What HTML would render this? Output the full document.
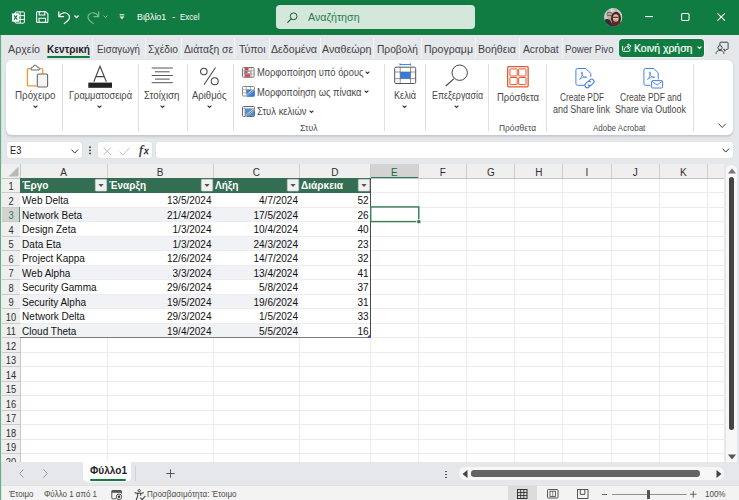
<!DOCTYPE html>
<html lang="el"><head><meta charset="utf-8"><title>Βιβλίο1 - Excel</title>
<style>
html,body{margin:0;padding:0;}
body{width:739px;height:500px;position:relative;overflow:hidden;background:#e5e8eb;font-family:'Liberation Sans',sans-serif;}
#app{position:absolute;left:0;top:0;width:739px;height:500px;overflow:hidden;}
#app div,#app svg,#app span{position:absolute;}
#app svg{overflow:visible;}
.t{white-space:pre;transform-origin:0 50%;}
.c{white-space:pre;font-size:10px;line-height:14px;color:#111;}
.r{text-align:right;}
</style></head><body><div id="app">
<div style="left:0px;top:0px;width:739px;height:34.5px;background:#107c41;"></div>
<div style="left:276.4px;top:5px;width:198.6px;height:24px;background:#d3e7db;border-radius:4px;"></div>
<span class="t" style="left:136.50px;top:11.85px;font-size:9px;line-height:11.7px;color:#fff;transform:scaleX(0.9831);">Βιβλίο1</span>
<span class="t" style="left:171.70px;top:11.85px;font-size:9px;line-height:11.7px;color:#fff;transform:scaleX(1.1333);">-</span>
<span class="t" style="left:179.80px;top:11.85px;font-size:9px;line-height:11.7px;color:#fff;transform:scaleX(0.8812);">Excel</span>
<span class="t" style="left:307.50px;top:11.07px;font-size:10.5px;line-height:13.65px;color:#2b7a51;transform:scaleX(1.0171);">Αναζήτηση</span>
<div style="left:0px;top:34.5px;width:739px;height:129px;background:#e5e8eb;"></div>
<span class="t" style="left:7.50px;top:42.50px;font-size:10px;line-height:13.0px;color:#424242;transform:scaleX(1.0717);">Αρχείο</span>
<span class="t" style="left:46.50px;top:42.50px;font-size:10px;line-height:13.0px;color:#1f1f1f;font-weight:700;transform:scaleX(1.0081);">Κεντρική</span>
<span class="t" style="left:96.50px;top:42.50px;font-size:10px;line-height:13.0px;color:#424242;transform:scaleX(0.9724);">Εισαγωγή</span>
<span class="t" style="left:147.50px;top:42.50px;font-size:10px;line-height:13.0px;color:#424242;transform:scaleX(1.0256);">Σχέδιο</span>
<span class="t" style="left:184.00px;top:42.50px;font-size:10px;line-height:13.0px;color:#424242;transform:scaleX(1.0265);">Διάταξη σε</span>
<span class="t" style="left:238.50px;top:42.50px;font-size:10px;line-height:13.0px;color:#424242;transform:scaleX(1.0495);">Τύποι</span>
<span class="t" style="left:270.50px;top:42.50px;font-size:10px;line-height:13.0px;color:#424242;transform:scaleX(1.0628);">Δεδομένα</span>
<span class="t" style="left:322.00px;top:42.50px;font-size:10px;line-height:13.0px;color:#424242;transform:scaleX(1.0677);">Αναθεώρη</span>
<span class="t" style="left:376.50px;top:42.50px;font-size:10px;line-height:13.0px;color:#424242;transform:scaleX(1.0210);">Προβολή</span>
<span class="t" style="left:423.50px;top:42.50px;font-size:10px;line-height:13.0px;color:#424242;transform:scaleX(1.0545);">Προγραμμ</span>
<span class="t" style="left:477.50px;top:42.50px;font-size:10px;line-height:13.0px;color:#424242;transform:scaleX(1.0606);">Βοήθεια</span>
<span class="t" style="left:522.50px;top:42.50px;font-size:10px;line-height:13.0px;color:#424242;transform:scaleX(1.0299);">Acrobat</span>
<span class="t" style="left:564.50px;top:42.50px;font-size:10px;line-height:13.0px;color:#424242;transform:scaleX(0.9589);">Power Pivo</span>
<div style="left:92.0px;top:38px;width:1px;height:20px;background:#f2f4f6;"></div>
<div style="left:144.5px;top:38px;width:1px;height:20px;background:#f2f4f6;"></div>
<div style="left:180.5px;top:38px;width:1px;height:20px;background:#f2f4f6;"></div>
<div style="left:234.0px;top:38px;width:1px;height:20px;background:#f2f4f6;"></div>
<div style="left:268.5px;top:38px;width:1px;height:20px;background:#f2f4f6;"></div>
<div style="left:319.5px;top:38px;width:1px;height:20px;background:#f2f4f6;"></div>
<div style="left:372.5px;top:38px;width:1px;height:20px;background:#f2f4f6;"></div>
<div style="left:420.5px;top:38px;width:1px;height:20px;background:#f2f4f6;"></div>
<div style="left:474.5px;top:38px;width:1px;height:20px;background:#f2f4f6;"></div>
<div style="left:518.5px;top:38px;width:1px;height:20px;background:#f2f4f6;"></div>
<div style="left:562.0px;top:38px;width:1px;height:20px;background:#f2f4f6;"></div>
<div style="left:46.5px;top:55.9px;width:43px;height:1.9px;background:#107c41;border-radius:1px;"></div>
<div style="left:618.8px;top:38.6px;width:85.3px;height:18.1px;background:#107c41;border-radius:3.5px;box-shadow:0 0 0 0.8px #f3f5f7;"></div>
<span class="t" style="left:634.30px;top:41.80px;font-size:10px;line-height:13.0px;color:#fff;transform:scaleX(1.0446);-webkit-text-stroke:0.2px #fff;">Κοινή χρήση</span>
<div style="left:6px;top:60px;width:727px;height:75px;background:#fff;border-radius:6px;box-shadow:0 1.2px 2.4px rgba(40,55,70,.17);"></div>
<div style="left:62.0px;top:64px;width:1px;height:67px;background:#e0e0e0;"></div>
<div style="left:137.5px;top:64px;width:1px;height:67px;background:#e0e0e0;"></div>
<div style="left:186.5px;top:64px;width:1px;height:67px;background:#e0e0e0;"></div>
<div style="left:232.5px;top:64px;width:1px;height:67px;background:#e0e0e0;"></div>
<div style="left:384.0px;top:64px;width:1px;height:67px;background:#e0e0e0;"></div>
<div style="left:424.5px;top:64px;width:1px;height:67px;background:#e0e0e0;"></div>
<div style="left:487.5px;top:64px;width:1px;height:67px;background:#e0e0e0;"></div>
<div style="left:545.5px;top:64px;width:1px;height:67px;background:#e0e0e0;"></div>
<div style="left:693.2px;top:64px;width:1px;height:67px;background:#e0e0e0;"></div>
<span class="t" style="left:15.00px;top:88.50px;font-size:10px;line-height:13.0px;color:#484848;transform:scaleX(0.9785);">Πρόχειρο</span>
<span class="t" style="left:68.50px;top:88.50px;font-size:10px;line-height:13.0px;color:#484848;transform:scaleX(0.9267);">Γραμματοσειρά</span>
<span class="t" style="left:144.00px;top:88.50px;font-size:10px;line-height:13.0px;color:#484848;transform:scaleX(0.9726);">Στοίχιση</span>
<span class="t" style="left:192.00px;top:88.50px;font-size:10px;line-height:13.0px;color:#484848;transform:scaleX(0.9505);">Αριθμός</span>
<span class="t" style="left:257.00px;top:66.00px;font-size:10px;line-height:13.0px;color:#484848;transform:scaleX(0.9350);">Μορφοποίηση υπό όρους</span>
<span class="t" style="left:257.00px;top:85.50px;font-size:10px;line-height:13.0px;color:#484848;transform:scaleX(0.9324);">Μορφοποίηση ως πίνακα</span>
<span class="t" style="left:257.00px;top:104.50px;font-size:10px;line-height:13.0px;color:#484848;transform:scaleX(0.9448);">Στυλ κελιών</span>
<span class="t" style="left:300.00px;top:122.97px;font-size:8.5px;line-height:11.05px;color:#4a4a4a;transform:scaleX(1.0228);">Στυλ</span>
<span class="t" style="left:393.50px;top:88.50px;font-size:10px;line-height:13.0px;color:#484848;transform:scaleX(0.9113);">Κελιά</span>
<span class="t" style="left:431.50px;top:88.50px;font-size:10px;line-height:13.0px;color:#484848;transform:scaleX(0.8853);">Επεξεργασία</span>
<span class="t" style="left:496.50px;top:90.50px;font-size:10px;line-height:13.0px;color:#484848;transform:scaleX(0.9488);">Πρόσθετα</span>
<span class="t" style="left:498.50px;top:122.97px;font-size:8.5px;line-height:11.05px;color:#4a4a4a;transform:scaleX(0.9834);">Πρόσθετα</span>
<span class="t" style="left:560.00px;top:91.00px;font-size:10px;line-height:13.0px;color:#484848;transform:scaleX(0.8334);">Create PDF</span>
<span class="t" style="left:553.00px;top:102.50px;font-size:10px;line-height:13.0px;color:#484848;transform:scaleX(0.8915);">and Share link</span>
<span class="t" style="left:619.50px;top:91.00px;font-size:10px;line-height:13.0px;color:#484848;transform:scaleX(0.8510);">Create PDF and</span>
<span class="t" style="left:614.50px;top:102.50px;font-size:10px;line-height:13.0px;color:#484848;transform:scaleX(0.8931);">Share via Outlook</span>
<span class="t" style="left:593.20px;top:122.97px;font-size:8.5px;line-height:11.05px;color:#4a4a4a;transform:scaleX(0.9379);">Adobe Acrobat</span>
<div style="left:7px;top:142.4px;width:75px;height:15.6px;background:#fff;border-radius:3px;box-shadow:0 0 0 0.6px #dcdfe3;"></div>
<div style="left:98px;top:142.4px;width:54px;height:15.6px;background:#fff;border-radius:3px;box-shadow:0 0 0 0.6px #dcdfe3;"></div>
<div style="left:156px;top:142.4px;width:576.5px;height:15.6px;background:#fff;border-radius:3px;box-shadow:0 0 0 0.6px #dcdfe3;"></div>
<span class="t" style="left:10.20px;top:143.35px;font-size:11px;line-height:14.3px;color:#222;transform:scaleX(0.8390);">E3</span>
<span class="t" style="left:139px;top:141.6px;font-family:'Liberation Serif',serif;font-style:italic;font-size:13.5px;line-height:16px;color:#222;-webkit-text-stroke:0.25px #222">f</span><span class="t" style="left:144px;top:144.3px;font-family:'Liberation Serif',serif;font-style:italic;font-size:10.5px;line-height:13px;color:#222;-webkit-text-stroke:0.3px #222">x</span>
<div style="left:0px;top:163.5px;width:739px;height:298.5px;background:#fff;"></div>
<div style="left:1.8px;top:163.5px;width:722.2px;height:14.5px;background:#efefef;"></div>
<div style="left:370px;top:163.5px;width:48.7px;height:14.5px;background:#d3d3d3;"></div>
<div style="left:370px;top:177px;width:48.7px;height:1.4px;background:#2f7a53;"></div>
<div style="left:1.5px;top:178px;width:18.5px;height:284px;background:#efefef;"></div>
<div style="left:1.5px;top:207px;width:18.5px;height:14.5px;background:#d3d3d3;"></div>
<div style="left:20px;top:177.5px;width:704px;height:1px;background:#ececec;"></div>
<div style="left:20px;top:192.0px;width:704px;height:1px;background:#ececec;"></div>
<div style="left:20px;top:206.5px;width:704px;height:1px;background:#ececec;"></div>
<div style="left:20px;top:221.0px;width:704px;height:1px;background:#ececec;"></div>
<div style="left:20px;top:235.5px;width:704px;height:1px;background:#ececec;"></div>
<div style="left:20px;top:250.0px;width:704px;height:1px;background:#ececec;"></div>
<div style="left:20px;top:264.5px;width:704px;height:1px;background:#ececec;"></div>
<div style="left:20px;top:279.0px;width:704px;height:1px;background:#ececec;"></div>
<div style="left:20px;top:293.5px;width:704px;height:1px;background:#ececec;"></div>
<div style="left:20px;top:308.0px;width:704px;height:1px;background:#ececec;"></div>
<div style="left:20px;top:322.5px;width:704px;height:1px;background:#ececec;"></div>
<div style="left:20px;top:337.0px;width:704px;height:1px;background:#ececec;"></div>
<div style="left:20px;top:351.5px;width:704px;height:1px;background:#ececec;"></div>
<div style="left:20px;top:366.0px;width:704px;height:1px;background:#ececec;"></div>
<div style="left:20px;top:380.5px;width:704px;height:1px;background:#ececec;"></div>
<div style="left:20px;top:395.0px;width:704px;height:1px;background:#ececec;"></div>
<div style="left:20px;top:409.5px;width:704px;height:1px;background:#ececec;"></div>
<div style="left:20px;top:424.0px;width:704px;height:1px;background:#ececec;"></div>
<div style="left:20px;top:438.5px;width:704px;height:1px;background:#ececec;"></div>
<div style="left:20px;top:453.0px;width:704px;height:1px;background:#ececec;"></div>
<div style="left:106.5px;top:178px;width:1px;height:284px;background:#ececec;"></div>
<div style="left:106.5px;top:164px;width:1px;height:14px;background:#cdcdcd;"></div>
<div style="left:212.5px;top:178px;width:1px;height:284px;background:#ececec;"></div>
<div style="left:212.5px;top:164px;width:1px;height:14px;background:#cdcdcd;"></div>
<div style="left:299.0px;top:178px;width:1px;height:284px;background:#ececec;"></div>
<div style="left:299.0px;top:164px;width:1px;height:14px;background:#cdcdcd;"></div>
<div style="left:369.5px;top:178px;width:1px;height:284px;background:#ececec;"></div>
<div style="left:369.5px;top:164px;width:1px;height:14px;background:#cdcdcd;"></div>
<div style="left:418.2px;top:178px;width:1px;height:284px;background:#ececec;"></div>
<div style="left:418.2px;top:164px;width:1px;height:14px;background:#cdcdcd;"></div>
<div style="left:466.3px;top:178px;width:1px;height:284px;background:#ececec;"></div>
<div style="left:466.3px;top:164px;width:1px;height:14px;background:#cdcdcd;"></div>
<div style="left:514.3px;top:178px;width:1px;height:284px;background:#ececec;"></div>
<div style="left:514.3px;top:164px;width:1px;height:14px;background:#cdcdcd;"></div>
<div style="left:562.3px;top:178px;width:1px;height:284px;background:#ececec;"></div>
<div style="left:562.3px;top:164px;width:1px;height:14px;background:#cdcdcd;"></div>
<div style="left:610.5px;top:178px;width:1px;height:284px;background:#ececec;"></div>
<div style="left:610.5px;top:164px;width:1px;height:14px;background:#cdcdcd;"></div>
<div style="left:658.8px;top:178px;width:1px;height:284px;background:#ececec;"></div>
<div style="left:658.8px;top:164px;width:1px;height:14px;background:#cdcdcd;"></div>
<div style="left:707.1px;top:178px;width:1px;height:284px;background:#ececec;"></div>
<div style="left:707.1px;top:164px;width:1px;height:14px;background:#cdcdcd;"></div>
<div style="left:723.5px;top:178px;width:1px;height:284px;background:#ececec;"></div>
<div style="left:723.5px;top:164px;width:1px;height:14px;background:#cdcdcd;"></div>
<div style="left:1.5px;top:177.5px;width:18.5px;height:1px;background:#cbcbcb;"></div>
<div style="left:1.5px;top:192.0px;width:18.5px;height:1px;background:#cbcbcb;"></div>
<div style="left:1.5px;top:206.5px;width:18.5px;height:1px;background:#cbcbcb;"></div>
<div style="left:1.5px;top:221.0px;width:18.5px;height:1px;background:#cbcbcb;"></div>
<div style="left:1.5px;top:235.5px;width:18.5px;height:1px;background:#cbcbcb;"></div>
<div style="left:1.5px;top:250.0px;width:18.5px;height:1px;background:#cbcbcb;"></div>
<div style="left:1.5px;top:264.5px;width:18.5px;height:1px;background:#cbcbcb;"></div>
<div style="left:1.5px;top:279.0px;width:18.5px;height:1px;background:#cbcbcb;"></div>
<div style="left:1.5px;top:293.5px;width:18.5px;height:1px;background:#cbcbcb;"></div>
<div style="left:1.5px;top:308.0px;width:18.5px;height:1px;background:#cbcbcb;"></div>
<div style="left:1.5px;top:322.5px;width:18.5px;height:1px;background:#cbcbcb;"></div>
<div style="left:1.5px;top:337.0px;width:18.5px;height:1px;background:#cbcbcb;"></div>
<div style="left:1.5px;top:351.5px;width:18.5px;height:1px;background:#cbcbcb;"></div>
<div style="left:1.5px;top:366.0px;width:18.5px;height:1px;background:#cbcbcb;"></div>
<div style="left:1.5px;top:380.5px;width:18.5px;height:1px;background:#cbcbcb;"></div>
<div style="left:1.5px;top:395.0px;width:18.5px;height:1px;background:#cbcbcb;"></div>
<div style="left:1.5px;top:409.5px;width:18.5px;height:1px;background:#cbcbcb;"></div>
<div style="left:1.5px;top:424.0px;width:18.5px;height:1px;background:#cbcbcb;"></div>
<div style="left:1.5px;top:438.5px;width:18.5px;height:1px;background:#cbcbcb;"></div>
<div style="left:1.5px;top:453.0px;width:18.5px;height:1px;background:#cbcbcb;"></div>
<div style="left:19.7px;top:163.5px;width:1px;height:298.5px;background:#c8c8c8;"></div>
<div style="left:1.5px;top:177.5px;width:722.5px;height:1px;background:#c4c4c4;"></div>
<div style="left:19px;top:207px;width:2px;height:14.5px;background:#4f936e;"></div>
<span class="t" style="left:48.50px;width:30px;text-align:center;top:165.60px;font-size:10px;line-height:13.0px;color:#303030;">A</span>
<span class="t" style="left:145.00px;width:30px;text-align:center;top:165.60px;font-size:10px;line-height:13.0px;color:#303030;">B</span>
<span class="t" style="left:241.25px;width:30px;text-align:center;top:165.60px;font-size:10px;line-height:13.0px;color:#303030;">C</span>
<span class="t" style="left:319.75px;width:30px;text-align:center;top:165.60px;font-size:10px;line-height:13.0px;color:#303030;">D</span>
<span class="t" style="left:379.35px;width:30px;text-align:center;top:165.60px;font-size:10px;line-height:13.0px;color:#1e6a42;">E</span>
<span class="t" style="left:427.75px;width:30px;text-align:center;top:165.60px;font-size:10px;line-height:13.0px;color:#303030;">F</span>
<span class="t" style="left:475.80px;width:30px;text-align:center;top:165.60px;font-size:10px;line-height:13.0px;color:#303030;">G</span>
<span class="t" style="left:523.80px;width:30px;text-align:center;top:165.60px;font-size:10px;line-height:13.0px;color:#303030;">H</span>
<span class="t" style="left:571.90px;width:30px;text-align:center;top:165.60px;font-size:10px;line-height:13.0px;color:#303030;">I</span>
<span class="t" style="left:620.15px;width:30px;text-align:center;top:165.60px;font-size:10px;line-height:13.0px;color:#303030;">J</span>
<span class="t" style="left:668.45px;width:30px;text-align:center;top:165.60px;font-size:10px;line-height:13.0px;color:#303030;">K</span>
<svg style="left:8px;top:166px" width="11" height="11" viewBox="0 0 11 11"><path d="M10.5 0.5V10.5H0.5Z" fill="#b9b9b9"/></svg>
<span class="t" style="left:-4.30px;width:30px;text-align:center;top:180.15px;font-size:10px;line-height:13.0px;color:#2e2e2e;transform-origin:center;transform:scaleX(0.93);">1</span>
<span class="t" style="left:-4.30px;width:30px;text-align:center;top:194.65px;font-size:10px;line-height:13.0px;color:#2e2e2e;transform-origin:center;transform:scaleX(0.93);">2</span>
<span class="t" style="left:-4.30px;width:30px;text-align:center;top:209.15px;font-size:10px;line-height:13.0px;color:#2a7a52;transform-origin:center;transform:scaleX(0.93);">3</span>
<span class="t" style="left:-4.30px;width:30px;text-align:center;top:223.65px;font-size:10px;line-height:13.0px;color:#2e2e2e;transform-origin:center;transform:scaleX(0.93);">4</span>
<span class="t" style="left:-4.30px;width:30px;text-align:center;top:238.15px;font-size:10px;line-height:13.0px;color:#2e2e2e;transform-origin:center;transform:scaleX(0.93);">5</span>
<span class="t" style="left:-4.30px;width:30px;text-align:center;top:252.65px;font-size:10px;line-height:13.0px;color:#2e2e2e;transform-origin:center;transform:scaleX(0.93);">6</span>
<span class="t" style="left:-4.30px;width:30px;text-align:center;top:267.15px;font-size:10px;line-height:13.0px;color:#2e2e2e;transform-origin:center;transform:scaleX(0.93);">7</span>
<span class="t" style="left:-4.30px;width:30px;text-align:center;top:281.65px;font-size:10px;line-height:13.0px;color:#2e2e2e;transform-origin:center;transform:scaleX(0.93);">8</span>
<span class="t" style="left:-4.30px;width:30px;text-align:center;top:296.15px;font-size:10px;line-height:13.0px;color:#2e2e2e;transform-origin:center;transform:scaleX(0.93);">9</span>
<span class="t" style="left:-4.30px;width:30px;text-align:center;top:310.65px;font-size:10px;line-height:13.0px;color:#2e2e2e;transform-origin:center;transform:scaleX(0.93);">10</span>
<span class="t" style="left:-4.30px;width:30px;text-align:center;top:325.15px;font-size:10px;line-height:13.0px;color:#2e2e2e;transform-origin:center;transform:scaleX(0.93);">11</span>
<span class="t" style="left:-4.30px;width:30px;text-align:center;top:339.65px;font-size:10px;line-height:13.0px;color:#2e2e2e;transform-origin:center;transform:scaleX(0.93);">12</span>
<span class="t" style="left:-4.30px;width:30px;text-align:center;top:354.15px;font-size:10px;line-height:13.0px;color:#2e2e2e;transform-origin:center;transform:scaleX(0.93);">13</span>
<span class="t" style="left:-4.30px;width:30px;text-align:center;top:368.65px;font-size:10px;line-height:13.0px;color:#2e2e2e;transform-origin:center;transform:scaleX(0.93);">14</span>
<span class="t" style="left:-4.30px;width:30px;text-align:center;top:383.15px;font-size:10px;line-height:13.0px;color:#2e2e2e;transform-origin:center;transform:scaleX(0.93);">15</span>
<span class="t" style="left:-4.30px;width:30px;text-align:center;top:397.65px;font-size:10px;line-height:13.0px;color:#2e2e2e;transform-origin:center;transform:scaleX(0.93);">16</span>
<span class="t" style="left:-4.30px;width:30px;text-align:center;top:412.15px;font-size:10px;line-height:13.0px;color:#2e2e2e;transform-origin:center;transform:scaleX(0.93);">17</span>
<span class="t" style="left:-4.30px;width:30px;text-align:center;top:426.65px;font-size:10px;line-height:13.0px;color:#2e2e2e;transform-origin:center;transform:scaleX(0.93);">18</span>
<span class="t" style="left:-4.30px;width:30px;text-align:center;top:441.15px;font-size:10px;line-height:13.0px;color:#2e2e2e;transform-origin:center;transform:scaleX(0.93);">19</span>
<span class="t" style="left:-4.30px;width:30px;text-align:center;top:455.65px;font-size:10px;line-height:13.0px;color:#2e2e2e;transform-origin:center;transform:scaleX(0.93);">20</span>
<div style="left:20px;top:178px;width:350px;height:14.5px;background:#336d52;"></div>
<div style="left:20.2px;top:192.5px;width:349.8px;height:145.0px;background:#fff;"></div>
<div style="left:20.2px;top:207.0px;width:279.3px;height:14.5px;background:#f0f2f5;"></div>
<div style="left:20.2px;top:236.0px;width:279.3px;height:14.5px;background:#f0f2f5;"></div>
<div style="left:20.2px;top:265.0px;width:279.3px;height:14.5px;background:#f0f2f5;"></div>
<div style="left:20.2px;top:294.0px;width:279.3px;height:14.5px;background:#f0f2f5;"></div>
<div style="left:20.2px;top:323.0px;width:279.3px;height:14.5px;background:#f0f2f5;"></div>
<div style="left:20.2px;top:206.5px;width:349.8px;height:1px;background:#eaecef;"></div>
<div style="left:20.2px;top:221.0px;width:349.8px;height:1px;background:#eaecef;"></div>
<div style="left:20.2px;top:235.5px;width:349.8px;height:1px;background:#eaecef;"></div>
<div style="left:20.2px;top:250.0px;width:349.8px;height:1px;background:#eaecef;"></div>
<div style="left:20.2px;top:264.5px;width:349.8px;height:1px;background:#eaecef;"></div>
<div style="left:20.2px;top:279.0px;width:349.8px;height:1px;background:#eaecef;"></div>
<div style="left:20.2px;top:293.5px;width:349.8px;height:1px;background:#eaecef;"></div>
<div style="left:20.2px;top:308.0px;width:349.8px;height:1px;background:#eaecef;"></div>
<div style="left:20.2px;top:322.5px;width:349.8px;height:1px;background:#eaecef;"></div>
<div style="left:20.2px;top:337.0px;width:349.8px;height:1px;background:#eaecef;"></div>
<div style="left:369.6px;top:178px;width:1px;height:159.4px;background:#4a4a4a;"></div>
<div style="left:20px;top:337px;width:350.5px;height:1px;background:#7a7a7a;"></div>
<span class="t" style="left:21.50px;top:179.38px;font-size:10.5px;line-height:13.65px;color:#fff;font-weight:700;transform:scaleX(0.9560);">Έργο</span>
<span class="t" style="left:108.50px;top:179.38px;font-size:10.5px;line-height:13.65px;color:#fff;font-weight:700;transform:scaleX(0.9525);">Έναρξη</span>
<span class="t" style="left:214.50px;top:179.38px;font-size:10.5px;line-height:13.65px;color:#fff;font-weight:700;transform:scaleX(0.9586);">Λήξη</span>
<span class="t" style="left:300.50px;top:179.38px;font-size:10.5px;line-height:13.65px;color:#fff;font-weight:700;transform:scaleX(0.9624);">Διάρκεια</span>
<svg style="left:94.7px;top:179.4px" width="12" height="12.4" viewBox="0 0 12 12.4"><rect x="0.3" y="0.3" width="11.4" height="11.8" rx="0.8" fill="#f1f1f1" stroke="#c4c4c4" stroke-width="0.6"/><path d="M3.4 4.9H8.6L6 8Z" fill="#555"/></svg>
<svg style="left:200.7px;top:179.4px" width="12" height="12.4" viewBox="0 0 12 12.4"><rect x="0.3" y="0.3" width="11.4" height="11.8" rx="0.8" fill="#f1f1f1" stroke="#c4c4c4" stroke-width="0.6"/><path d="M3.4 4.9H8.6L6 8Z" fill="#555"/></svg>
<svg style="left:287.2px;top:179.4px" width="12" height="12.4" viewBox="0 0 12 12.4"><rect x="0.3" y="0.3" width="11.4" height="11.8" rx="0.8" fill="#f1f1f1" stroke="#c4c4c4" stroke-width="0.6"/><path d="M3.4 4.9H8.6L6 8Z" fill="#555"/></svg>
<svg style="left:357.7px;top:179.4px" width="12" height="12.4" viewBox="0 0 12 12.4"><rect x="0.3" y="0.3" width="11.4" height="11.8" rx="0.8" fill="#f1f1f1" stroke="#c4c4c4" stroke-width="0.6"/><path d="M3.4 4.9H8.6L6 8Z" fill="#555"/></svg>
<span class="c" style="left:22.1px;top:194.05px">Web Delta</span><span class="c r" style="left:107px;width:104.5px;top:194.05px">13/5/2024</span><span class="c r" style="left:213px;width:85px;top:194.05px">4/7/2024</span><span class="c r" style="left:299.5px;width:69px;top:194.05px">52</span><span class="c" style="left:22.1px;top:208.55px">Network Beta</span><span class="c r" style="left:107px;width:104.5px;top:208.55px">21/4/2024</span><span class="c r" style="left:213px;width:85px;top:208.55px">17/5/2024</span><span class="c r" style="left:299.5px;width:69px;top:208.55px">26</span><span class="c" style="left:22.1px;top:223.05px">Design Zeta</span><span class="c r" style="left:107px;width:104.5px;top:223.05px">1/3/2024</span><span class="c r" style="left:213px;width:85px;top:223.05px">10/4/2024</span><span class="c r" style="left:299.5px;width:69px;top:223.05px">40</span><span class="c" style="left:22.1px;top:237.55px">Data Eta</span><span class="c r" style="left:107px;width:104.5px;top:237.55px">1/3/2024</span><span class="c r" style="left:213px;width:85px;top:237.55px">24/3/2024</span><span class="c r" style="left:299.5px;width:69px;top:237.55px">23</span><span class="c" style="left:22.1px;top:252.05px">Project Kappa</span><span class="c r" style="left:107px;width:104.5px;top:252.05px">12/6/2024</span><span class="c r" style="left:213px;width:85px;top:252.05px">14/7/2024</span><span class="c r" style="left:299.5px;width:69px;top:252.05px">32</span><span class="c" style="left:22.1px;top:266.55px">Web Alpha</span><span class="c r" style="left:107px;width:104.5px;top:266.55px">3/3/2024</span><span class="c r" style="left:213px;width:85px;top:266.55px">13/4/2024</span><span class="c r" style="left:299.5px;width:69px;top:266.55px">41</span><span class="c" style="left:22.1px;top:281.05px">Security Gamma</span><span class="c r" style="left:107px;width:104.5px;top:281.05px">29/6/2024</span><span class="c r" style="left:213px;width:85px;top:281.05px">5/8/2024</span><span class="c r" style="left:299.5px;width:69px;top:281.05px">37</span><span class="c" style="left:22.1px;top:295.55px">Security Alpha</span><span class="c r" style="left:107px;width:104.5px;top:295.55px">19/5/2024</span><span class="c r" style="left:213px;width:85px;top:295.55px">19/6/2024</span><span class="c r" style="left:299.5px;width:69px;top:295.55px">31</span><span class="c" style="left:22.1px;top:310.05px">Network Delta</span><span class="c r" style="left:107px;width:104.5px;top:310.05px">29/3/2024</span><span class="c r" style="left:213px;width:85px;top:310.05px">1/5/2024</span><span class="c r" style="left:299.5px;width:69px;top:310.05px">33</span><span class="c" style="left:22.1px;top:324.55px">Cloud Theta</span><span class="c r" style="left:107px;width:104.5px;top:324.55px">19/4/2024</span><span class="c r" style="left:213px;width:85px;top:324.55px">5/5/2024</span><span class="c r" style="left:299.5px;width:69px;top:324.55px">16</span>
<svg style="left:368px;top:204px" width="56" height="22" viewBox="368 204 56 22"><rect x="370.7" y="206.9" width="48.1" height="14.7" fill="none" stroke="#3a8059" stroke-width="1.45"/><rect x="416.4" y="219.3" width="4.6" height="4.4" fill="#fff"/><rect x="417.3" y="220.2" width="3.1" height="3" fill="#2f7750"/></svg>
<svg style="left:366.8px;top:333.8px" width="3.6" height="3.6" viewBox="0 0 3.6 3.6"><path d="M3.6 0V3.6H0Z" fill="#2c4fa8"/></svg>
<div style="left:724px;top:162px;width:15px;height:300px;background:#e5e8eb;"></div>
<div style="left:725.6px;top:165px;width:11.6px;height:297px;background:#f7f7f7;border-radius:6px 6px 0 0;"></div>
<div style="left:728.6px;top:177px;width:5.8px;height:253px;background:#444;border-radius:3px;"></div>
<svg style="left:727.5px;top:167.5px" width="8" height="6" viewBox="0 0 8 6"><path d="M0 5.5H8L4 0.5Z" fill="#777"/></svg>
<svg style="left:727.5px;top:454px" width="8" height="6" viewBox="0 0 8 6"><path d="M0 0.5H8L4 5.5Z" fill="#555"/></svg>
<div style="left:0px;top:462px;width:739px;height:24px;background:#e5e7ea;"></div>
<div style="left:83px;top:462px;width:48px;height:20px;background:#fff;border-radius:0 0 5px 5px;"></div>
<span class="t" style="left:89.50px;top:464.48px;font-size:10.5px;line-height:13.65px;color:#1f1f1f;font-weight:700;transform:scaleX(0.9599);">Φύλλο1</span>
<div style="left:90px;top:479px;width:36px;height:1.8px;background:#107c41;border-radius:1px;"></div>
<div style="left:134.5px;top:466px;width:1px;height:15px;background:#cfd2d6;"></div>
<div style="left:459px;top:467px;width:265px;height:12.5px;background:#f7f7f7;border-radius:6px;"></div>
<div style="left:471px;top:470px;width:229px;height:6.5px;background:#636363;border-radius:3.2px;"></div>
<svg style="left:462px;top:469.5px" width="6" height="8" viewBox="0 0 6 8"><path d="M5.5 0V8L0.5 4Z" fill="#444"/></svg>
<svg style="left:715.5px;top:469.5px" width="6" height="8" viewBox="0 0 6 8"><path d="M0.5 0V8L5.5 4Z" fill="#444"/></svg>
<div style="left:445.3px;top:470.5px;width:1.5px;height:1.5px;background:#444;border-radius:1px;"></div>
<div style="left:445.3px;top:473.5px;width:1.5px;height:1.5px;background:#444;border-radius:1px;"></div>
<div style="left:445.3px;top:476.5px;width:1.5px;height:1.5px;background:#444;border-radius:1px;"></div>
<div style="left:0px;top:485px;width:739px;height:1px;background:#dfe1e4;"></div>
<div style="left:0px;top:486px;width:739px;height:14px;background:#f3f3f3;"></div>
<div style="left:507.5px;top:486px;width:29.5px;height:14px;background:#dcdcdc;"></div>
<span class="t" style="left:8.50px;top:488.78px;font-size:8.5px;line-height:11.05px;color:#4a4a4a;transform:scaleX(0.9367);">Έτοιμο</span>
<span class="t" style="left:43.50px;top:488.78px;font-size:8.5px;line-height:11.05px;color:#4a4a4a;transform:scaleX(0.9368);">Φύλλο 1 από 1</span>
<span class="t" style="left:147.00px;top:488.78px;font-size:8.5px;line-height:11.05px;color:#4a4a4a;transform:scaleX(0.9471);">Προσβασιμότητα: Έτοιμο</span>
<span class="t" style="left:705.00px;top:488.78px;font-size:8.5px;line-height:11.05px;color:#4a4a4a;transform:scaleX(0.9425);">100%</span>
<div style="left:0px;top:34.5px;width:1px;height:465.5px;background:#68ad88;"></div>
<div style="left:1px;top:34.5px;width:1px;height:465.5px;background:rgba(200,222,210,.55);"></div>
<!-- title bar icons -->
<svg style="left:12px;top:10.5px" width="13" height="13" viewBox="0 0 13 13"><rect x="3.200" y="0.900" width="9.200" height="11.200" rx="0.900" fill="none" stroke="#fff" stroke-width="1"/><path d="M3.200 4.600H12.400M3.200 8.400H12.400M8.200 0.900V12.100" stroke="#fff" stroke-width="0.900" fill="none"/><rect x="0" y="2.300" width="7.200" height="8.400" rx="0.900" fill="#fff"/><path d="M2 4.300L5.200 8.700M5.200 4.300L2 8.700" stroke="#107c41" stroke-width="1.150"/></svg>
<svg style="left:36.4px;top:10.9px" width="12.5" height="12" viewBox="0 0 12.5 12"><path d="M1.6 0.6H9.6L11.9 2.9V10.4a1 1 0 0 1-1 1H1.6a1 1 0 0 1-1-1V1.6a1 1 0 0 1 1-1Z" fill="none" stroke="#fff" stroke-width="1.1"/><path d="M3.2 0.8V4H8.8V0.8M3 11.2V7.2H9.5V11.2" fill="none" stroke="#fff" stroke-width="1.1"/></svg>
<svg style="left:58.4px;top:10.6px" width="12.5" height="13" viewBox="0 0 12.5 13"><path d="M0.8 0.8V5.6H5.6" fill="none" stroke="#fff" stroke-width="1.2" stroke-linecap="round" stroke-linejoin="round"/><path d="M1 5.4C3 1.2 8 0.8 10.3 3.4C12.4 5.8 11.4 8.2 9.4 10L6.2 12.6" fill="none" stroke="#fff" stroke-width="1.2" stroke-linecap="round"/></svg>
<svg style="left:73.800px;top:15.200px" width="5" height="3.4" viewBox="0 0 5 3.4"><path d="M0.500 0.500L2.500 2.600L4.500 0.500" fill="none" stroke="#fff" stroke-width="1.250"/></svg>
<svg style="left:86.5px;top:10.6px;opacity:.45" width="12.5" height="13" viewBox="0 0 12.5 13"><g transform="translate(12.5 0) scale(-1 1)"><path d="M0.8 0.8V5.6H5.6" fill="none" stroke="#fff" stroke-width="1.2" stroke-linecap="round" stroke-linejoin="round"/><path d="M1 5.4C3 1.2 8 0.8 10.3 3.4C12.4 5.8 11.4 8.2 9.4 10L6.2 12.6" fill="none" stroke="#fff" stroke-width="1.2" stroke-linecap="round"/></g></svg>
<svg style="left:102.7px;top:15.2px;opacity:.45" width="5" height="3.4" viewBox="0 0 5 3.4"><path d="M0.5 0.5L2.5 2.6L4.5 0.5" fill="none" stroke="#fff" stroke-width="1"/></svg>
<svg style="left:118.6px;top:14.2px" width="6" height="6" viewBox="0 0 6 6"><path d="M0.6 0.8H5.4" stroke="#fff" stroke-width="1"/><path d="M0.6 2.6H5.4L3 5.2Z" fill="#fff"/></svg>
<!-- search icon -->
<svg style="left:286.5px;top:11.5px" width="11" height="11" viewBox="0 0 11 11"><circle cx="6.6" cy="4.3" r="3.4" fill="none" stroke="#185c37" stroke-width="1"/><path d="M4.2 6.8L0.7 10.3" stroke="#185c37" stroke-width="1.1" stroke-linecap="round"/></svg>
<!-- avatar -->
<svg style="left:603.8px;top:7.6px" width="18.4" height="18.4" viewBox="0 0 18.4 18.4"><defs><clipPath id="av"><circle cx="9.2" cy="9.2" r="9.2"/></clipPath></defs><g clip-path="url(#av)"><rect width="18.4" height="18.4" fill="#c9c8c8"/><rect x="3" y="0" width="1.6" height="9" fill="#aeb0b2"/><rect x="7" y="0" width="1.4" height="7" fill="#dcdcdc"/><rect x="11" y="0" width="2" height="6" fill="#b8b8ba"/><path d="M0 18.4V12.500C1.500 10.800 4 10.600 6 11.500L9 18.4Z" fill="#2e2e33"/><ellipse cx="5.700" cy="6.300" rx="3" ry="2.600" fill="#6e6a68"/><ellipse cx="5.700" cy="8" rx="2.500" ry="3.200" fill="#c3a999"/><path d="M3.400 7.400H8" stroke="#4a4040" stroke-width="0.700"/><path d="M4.200 10.200Q5.700 11.600 7.200 10.200L7 11.600H4.400Z" fill="#8f8a88"/><ellipse cx="12" cy="10.500" rx="5" ry="6.800" fill="#4a2422"/><path d="M6.500 18.400C7 14 9 12 12 12S17.500 14 18.400 18.400Z" fill="#5b2a28"/><ellipse cx="11.800" cy="10" rx="2.900" ry="3.700" fill="#e3bba6"/><path d="M9.100 9.300H14.500" stroke="#2d2020" stroke-width="1"/><path d="M10.600 12.100Q11.800 12.900 13 12.100" stroke="#b0524e" stroke-width="0.600" fill="none"/></g></svg>
<!-- window controls -->
<svg style="left:645px;top:16.2px" width="8" height="1.2" viewBox="0 0 8 1.2"><rect width="8" height="1.1" fill="#fff"/></svg>
<svg style="left:680.7px;top:13px" width="8.6" height="8" viewBox="0 0 8.6 8"><rect x="0.55" y="0.55" width="7.5" height="6.9" rx="1.2" fill="none" stroke="#fff" stroke-width="1.1"/></svg>
<svg style="left:716.8px;top:13px" width="8.4" height="8" viewBox="0 0 8.4 8"><path d="M0.5 0.4L7.9 7.6M7.9 0.4L0.5 7.6" stroke="#fff" stroke-width="1.1"/></svg>
<!-- share icon & chevron, comments -->
<svg style="left:621px;top:43px" width="11" height="10" viewBox="621 43 11 10"><path d="M622.600 46.400V50.500A0.900 0.900 0 0 0 623.500 51.400H628.900A0.900 0.900 0 0 0 629.800 50.500V49" fill="none" stroke="#fff" stroke-width="0.950" stroke-linecap="round"/><path d="M624.200 49.900C624.400 47.600 625.800 46.500 628 46.400M628 44.300V48.600L630.800 46.400Z" fill="none" stroke="#fff" stroke-width="0.950" stroke-linejoin="round" stroke-linecap="round"/></svg>
<svg style="left:697px;top:46.400px" width="5" height="3.4" viewBox="0 0 5 3.4"><path d="M0.600 0.600L2.500 2.500L4.400 0.600" fill="none" stroke="#fff" stroke-width="1.150"/></svg>
<svg style="left:714px;top:41px" width="16" height="14" viewBox="714 41 16 14"><path d="M719.900 45V43.100A0.900 0.900 0 0 1 720.800 42.200H727.200A0.900 0.900 0 0 1 728.100 43.100V48.500A0.900 0.900 0 0 1 727.200 49.400H726.300L724.600 51.100V49.400H723.200" fill="none" stroke="#3a3a3a" stroke-width="0.950" stroke-linejoin="round"/><circle cx="720" cy="47.700" r="2.100" fill="#e5e8eb" stroke="#3a3a3a" stroke-width="0.950"/><path d="M716 53.500C716.100 51.300 717.700 50.500 720 50.500S723.900 51.300 724 53.500" fill="none" stroke="#3a3a3a" stroke-width="0.950" stroke-linecap="round"/></svg>

<!-- ribbon: clipboard -->
<svg style="left:26px;top:64px" width="23" height="24" viewBox="0 0 23 24"><path d="M5.2 4.6H2.6a1.2 1.2 0 0 0-1.2 1.2V20.6a1.2 1.2 0 0 0 1.2 1.2H10.6" fill="none" stroke="#ee9a2e" stroke-width="1.3"/><path d="M13.2 4.6H15.6a1.2 1.2 0 0 1 1.2 1.2V9.8" fill="none" stroke="#ee9a2e" stroke-width="1.3"/><path d="M5.2 6V4.2A1 1 0 0 1 6.2 3.2H7.2A2 2 0 0 1 11.2 3.200H12.200A1 1 0 0 1 13.200 4.200V6Z" fill="#fff" stroke="#666" stroke-width="1"/><rect x="11.3" y="10" width="10.3" height="13" rx="1.2" fill="#f4f4f4" stroke="#666" stroke-width="1.1"/></svg>
<!-- font icon -->
<svg style="left:88px;top:64.5px" width="24.5" height="23" viewBox="0 0 24.5 23"><path d="M5.8 16.8L12 1.2L18.400 16.8M7.800 11.600H16.300" fill="none" stroke="#444" stroke-width="1.1"/><rect x="0.3" y="17.6" width="23.700" height="5.2" fill="#222"/></svg>
<!-- align icon -->
<svg style="left:151px;top:66px" width="23" height="19" viewBox="0 0 23 19"><path d="M0.700 2H21.800M4 5.800H18.700M0.700 9.500H21.800M4 13.100H18.700M0.700 16.700H21.800" stroke="#555" stroke-width="1"/></svg>
<!-- percent -->
<svg style="left:199px;top:65.500px" width="21" height="20" viewBox="0 0 21 20"><circle cx="4.800" cy="5.500" r="3.300" fill="none" stroke="#444" stroke-width="1.050"/><circle cx="15.700" cy="15.200" r="3.500" fill="none" stroke="#444" stroke-width="1.050"/><path d="M16.500 1.500L5 18.800" stroke="#444" stroke-width="1.050"/></svg>
<!-- chevrons under big buttons -->
<svg style="left:33px;top:105.2px" width="5" height="3.4" viewBox="0 0 5 3.4"><path d="M0.6 0.6L2.5 2.5L4.4 0.6" fill="none" stroke="#333" stroke-width="1.05"/></svg>
<svg style="left:97px;top:105.2px" width="5" height="3.4" viewBox="0 0 5 3.4"><path d="M0.6 0.6L2.5 2.5L4.4 0.6" fill="none" stroke="#333" stroke-width="1.05"/></svg>
<svg style="left:159.5px;top:105.2px" width="5" height="3.4" viewBox="0 0 5 3.4"><path d="M0.6 0.6L2.5 2.5L4.4 0.6" fill="none" stroke="#333" stroke-width="1.05"/></svg>
<svg style="left:206.500px;top:105.2px" width="5" height="3.4" viewBox="0 0 5 3.4"><path d="M0.6 0.6L2.5 2.5L4.4 0.6" fill="none" stroke="#333" stroke-width="1.05"/></svg>
<svg style="left:401.500px;top:105.2px" width="5" height="3.4" viewBox="0 0 5 3.4"><path d="M0.6 0.6L2.5 2.5L4.4 0.6" fill="none" stroke="#333" stroke-width="1.05"/></svg>
<svg style="left:453.500px;top:105.2px" width="5" height="3.4" viewBox="0 0 5 3.4"><path d="M0.6 0.6L2.5 2.5L4.4 0.6" fill="none" stroke="#333" stroke-width="1.05"/></svg>
<!-- style chevrons -->
<svg style="left:364.500px;top:70.500px" width="5" height="3.4" viewBox="0 0 5 3.4"><path d="M0.6 0.6L2.5 2.5L4.4 0.6" fill="none" stroke="#333" stroke-width="1.05"/></svg>
<svg style="left:363.500px;top:90px" width="5" height="3.4" viewBox="0 0 5 3.4"><path d="M0.6 0.6L2.5 2.5L4.4 0.6" fill="none" stroke="#333" stroke-width="1.05"/></svg>
<svg style="left:308.800px;top:109.500px" width="5" height="3.4" viewBox="0 0 5 3.4"><path d="M0.6 0.6L2.5 2.5L4.4 0.6" fill="none" stroke="#333" stroke-width="1.05"/></svg>
<!-- conditional formatting -->
<svg style="left:242.300px;top:66.800px" width="13" height="11" viewBox="0 0 13 11"><rect x="0.500" y="0.500" width="11.600" height="9.800" rx="1" fill="#fff" stroke="#6f6f6f" stroke-width="0.950"/><rect x="3" y="0.800" width="3.300" height="2.800" fill="#ea3e38"/><rect x="2.400" y="4" width="2.500" height="2.700" fill="#2f7fe0"/><rect x="5.300" y="4.200" width="3.300" height="2.300" fill="#fff" stroke="#ea3e38" stroke-width="0.600"/><rect x="3" y="7.200" width="5.300" height="2.700" fill="#ea3e38"/><path d="M0.500 3.800H12.100M0.500 7H12.100M2.600 0.500V10.300M6.500 0.500V3.700M9.300 0.500V10.300" stroke="#8a8a8a" stroke-width="0.600"/></svg>
<!-- format as table -->
<svg style="left:242px;top:86.400px" width="13.500" height="11.500" viewBox="0 0 13.500 11.500"><rect x="0.500" y="0.500" width="12" height="9.600" rx="1" fill="#fff" stroke="#777" stroke-width="0.900"/><path d="M0.500 3.600H12.500M0.500 6.800H12.500M4.300 0.500V10M8.400 0.500V10" stroke="#888" stroke-width="0.600"/><path d="M4.300 3.800H12.500V10.500L9 10.800L4.300 10.500Z" fill="#2f7fe0"/><path d="M3 11.300L4.600 8.200L11.600 2.600L12.800 4L5.800 9.800Z" fill="#fff"/><path d="M3.500 10.800L5 8.600L11.700 3.200L12.400 4L5.700 9.500Z" fill="#777"/></svg>
<!-- cell styles -->
<svg style="left:242px;top:105.800px" width="13.500" height="11.500" viewBox="0 0 13.500 11.500"><rect x="0.500" y="0.500" width="12" height="10" rx="1" fill="#fff" stroke="#666" stroke-width="1"/><path d="M3 2.800H12V10.200H3Z" fill="#4a90e2"/><path d="M0.500 2.600H12.500M2.800 0.500V10.500" stroke="#888" stroke-width="0.600"/><path d="M3 11.300L4.600 8.200L11.600 2.600L12.800 4L5.800 9.800Z" fill="#fff"/><path d="M3.500 10.800L5 8.600L11.700 3.200L12.400 4L5.700 9.500Z" fill="#777"/></svg>
<!-- cells icon -->
<svg style="left:393.500px;top:63px" width="23" height="21.500" viewBox="0 0 23 21.500"><rect x="0.700" y="4.200" width="21" height="16.300" rx="1.200" fill="#fff" stroke="#555" stroke-width="1"/><rect x="6.200" y="9" width="10.300" height="6.600" fill="#2f7fe0"/><path d="M0.700 9H21.700M0.700 15.600H21.700M6.200 4.200V20.500M16.500 4.200V20.500" stroke="#666" stroke-width="0.700"/><path d="M6 1.500H16.700M6 0.300V2.700M16.700 0.300V2.700" stroke="#2f7fe0" stroke-width="0.900"/></svg>
<!-- magnifier -->
<svg style="left:445px;top:64px" width="24" height="23" viewBox="0 0 24 23"><circle cx="14.700" cy="8.700" r="7.700" fill="none" stroke="#444" stroke-width="1"/><path d="M9 14.600L0.800 22" stroke="#444" stroke-width="1.100"/></svg>
<!-- add-ins -->
<svg style="left:506.500px;top:66px" width="22" height="21.500" viewBox="0 0 22 21.500"><rect x="0.650" y="0.650" width="20.500" height="20.200" rx="1" fill="none" stroke="#e0592f" stroke-width="1.300"/><rect x="2.900" y="2.900" width="7.300" height="7.100" rx="0.500" fill="none" stroke="#e0592f" stroke-width="1"/><rect x="11.700" y="2.900" width="7.300" height="7.100" rx="0.500" fill="none" stroke="#e0592f" stroke-width="1"/><rect x="2.900" y="11.500" width="7.300" height="7.100" rx="0.500" fill="none" stroke="#e0592f" stroke-width="1"/><rect x="11.700" y="11.500" width="7.300" height="7.100" rx="0.500" fill="none" stroke="#e0592f" stroke-width="1"/></svg>
<!-- pdf link -->
<svg style="left:575px;top:68px" width="20" height="21" viewBox="0 0 20 21"><path d="M9.500 17.300H2.500A1.600 1.600 0 0 1 0.900 15.700V2.100A1.600 1.600 0 0 1 2.500 0.500H10.800L15.800 5.500V9" fill="none" stroke="#4a7fe8" stroke-width="1"/><path d="M4.500 11.500C6.500 9.500 7.600 6.500 7.400 4.600C7.300 3.600 6.300 3.700 6.400 4.800C6.600 7 8.800 9.300 11 9.600C12 9.700 12 8.800 11 8.800C8.800 8.800 6 10 4.500 11.500Z" fill="none" stroke="#4a7fe8" stroke-width="0.800"/><g fill="none" stroke="#4a7fe8" stroke-width="1.100" stroke-linecap="round"><path d="M13.600 13.200L15 11.800a2.300 2.300 0 0 1 3.300 3.300L16.500 16.900a2.300 2.300 0 0 1-3.300 0"/><path d="M15.300 17.600L13.900 19a2.300 2.300 0 0 1-3.300-3.300L12.400 13.900a2.300 2.300 0 0 1 3.300 0"/></g></svg>
<!-- pdf mail -->
<svg style="left:643px;top:68px" width="20.500" height="21" viewBox="0 0 20.500 21"><path d="M7.500 17.300H2.500A1.600 1.600 0 0 1 0.900 15.700V2.100A1.600 1.600 0 0 1 2.500 0.500H10.800L15.200 4.900V11.500" fill="none" stroke="#4a7fe8" stroke-width="1"/><path d="M4.500 11.500C6.500 9.500 7.600 6.500 7.400 4.600C7.300 3.600 6.300 3.700 6.400 4.800C6.600 7 8.800 9.300 11 9.600C12 9.700 12 8.800 11 8.800C8.800 8.800 6 10 4.500 11.500Z" fill="none" stroke="#4a7fe8" stroke-width="0.800"/><rect x="8.600" y="12.600" width="11" height="7.400" rx="1" fill="#fff" stroke="#4a7fe8" stroke-width="1"/><path d="M8.900 13.200L14.100 17L19.300 13.200" fill="none" stroke="#4a7fe8" stroke-width="0.900"/></svg>
<!-- ribbon collapse chevron -->
<svg style="left:718px;top:122.500px" width="8.500" height="5.500" viewBox="0 0 8.500 5.500"><path d="M0.600 0.700L4.250 4.500L7.900 0.700" fill="none" stroke="#444" stroke-width="1"/></svg>
<!-- formula bar -->
<svg style="left:70.600px;top:148.500px" width="7.500" height="5" viewBox="0 0 7.500 5"><path d="M0.500 0.600L3.750 4.100L7 0.600" fill="none" stroke="#333" stroke-width="1"/></svg>
<svg style="left:722px;top:148px" width="7.500" height="5" viewBox="0 0 7.500 5"><path d="M0.500 0.600L3.750 4.100L7 0.600" fill="none" stroke="#333" stroke-width="1"/></svg>
<svg style="left:89.300px;top:146.400px" width="2" height="9" viewBox="0 0 2 9"><circle cx="1" cy="1.200" r="0.900" fill="#333"/><circle cx="1" cy="4.300" r="0.900" fill="#333"/><circle cx="1" cy="7.400" r="0.900" fill="#333"/></svg>
<svg style="left:103px;top:146.600px" width="8.500" height="8.500" viewBox="0 0 8.500 8.500"><path d="M0.500 0.500L8 8M8 0.500L0.500 8" stroke="#b5b5b5" stroke-width="0.900"/></svg>
<svg style="left:118.500px;top:146.600px" width="11.500" height="8.500" viewBox="0 0 11.500 8.500"><path d="M0.500 4.800L3.800 8L11 0.600" fill="none" stroke="#b5b5b5" stroke-width="0.900"/></svg>
<!-- sheet nav -->
<svg style="left:18.500px;top:468.500px" width="5" height="9" viewBox="0 0 5 9"><path d="M4.400 0.500L0.700 4.500L4.400 8.500" fill="none" stroke="#9a9a9a" stroke-width="1"/></svg>
<svg style="left:42.500px;top:468.500px" width="5" height="9" viewBox="0 0 5 9"><path d="M0.600 0.500L4.300 4.500L0.600 8.500" fill="none" stroke="#9a9a9a" stroke-width="1"/></svg>
<svg style="left:166px;top:468.500px" width="9" height="9" viewBox="0 0 9 9"><path d="M4.500 0.300V8.700M0.300 4.500H8.700" stroke="#505050" stroke-width="0.950"/></svg>
<!-- status icons -->
<svg style="left:110.500px;top:489.500px" width="11.500" height="10" viewBox="0 0 11.500 10"><path d="M5 8.800H1.600a0.800 0.800 0 0 1-.8-.8V1.300a0.800 0.800 0 0 1 .8-.8H9.600a0.800 0.800 0 0 1 .8.800V3.600" fill="none" stroke="#444" stroke-width="0.900"/><rect x="0.800" y="0.500" width="9.600" height="2.300" fill="#555"/><circle cx="8" cy="6.800" r="2.700" fill="#f3f3f3" stroke="#444" stroke-width="0.900"/><circle cx="8" cy="6.800" r="1.200" fill="#333"/></svg>
<svg style="left:133.500px;top:488.600px" width="12" height="11.500" viewBox="0 0 12 11.500"><circle cx="5.200" cy="1.700" r="1.200" fill="none" stroke="#3a3a3a" stroke-width="0.900"/><path d="M1 3.700C2.800 4.500 7.600 4.500 9.400 3.700M3.700 4.400V7L2.300 11M6.700 4.400V6.300" fill="none" stroke="#3a3a3a" stroke-width="1.050" stroke-linecap="round"/><path d="M6.300 8.700L8.200 10.600L11.300 7" fill="none" stroke="#3a3a3a" stroke-width="1.100"/></svg>
<svg style="left:516.500px;top:489px" width="10.500" height="10" viewBox="0 0 10.500 10"><rect x="0.500" y="0.500" width="9.500" height="9" fill="none" stroke="#333" stroke-width="1"/><path d="M0.500 3.500H10M0.500 6.500H10M3.700 0.500V9.500M6.800 0.500V9.500" stroke="#333" stroke-width="0.900"/></svg>
<svg style="left:546.800px;top:489.300px" width="11.500" height="9.500" viewBox="0 0 11.500 9.500"><rect x="0.500" y="0.500" width="10.500" height="8.500" rx="0.800" fill="none" stroke="#444" stroke-width="0.900"/><rect x="3" y="2.200" width="5.500" height="5.200" fill="none" stroke="#444" stroke-width="0.800"/><path d="M5.750 2.200V7.400" stroke="#444" stroke-width="0.600"/></svg>
<svg style="left:577px;top:489px" width="11.500" height="10" viewBox="0 0 11.500 10"><path d="M0.500 0.500H11V9.500H0.500Z" fill="none" stroke="#444" stroke-width="0.900"/><path d="M3.300 0.500V5.400H7.800V0.500" fill="none" stroke="#444" stroke-width="0.900"/></svg>
<svg style="left:601.500px;top:494px" width="5" height="1" viewBox="0 0 5 1"><rect width="5" height="0.900" fill="#555"/></svg>
<svg style="left:611.600px;top:494px" width="74.500" height="1" viewBox="0 0 74.500 1"><rect width="74.500" height="0.800" fill="#777"/></svg>
<svg style="left:647.300px;top:490px" width="3" height="9" viewBox="0 0 3 9"><rect width="3" height="9" rx="0.500" fill="#555"/></svg>
<svg style="left:689.800px;top:491.300px" width="6.500" height="6.500" viewBox="0 0 6.500 6.500"><path d="M3.250 0V6.500M0 3.250H6.500" stroke="#555" stroke-width="0.900"/></svg>

</div></body></html>
